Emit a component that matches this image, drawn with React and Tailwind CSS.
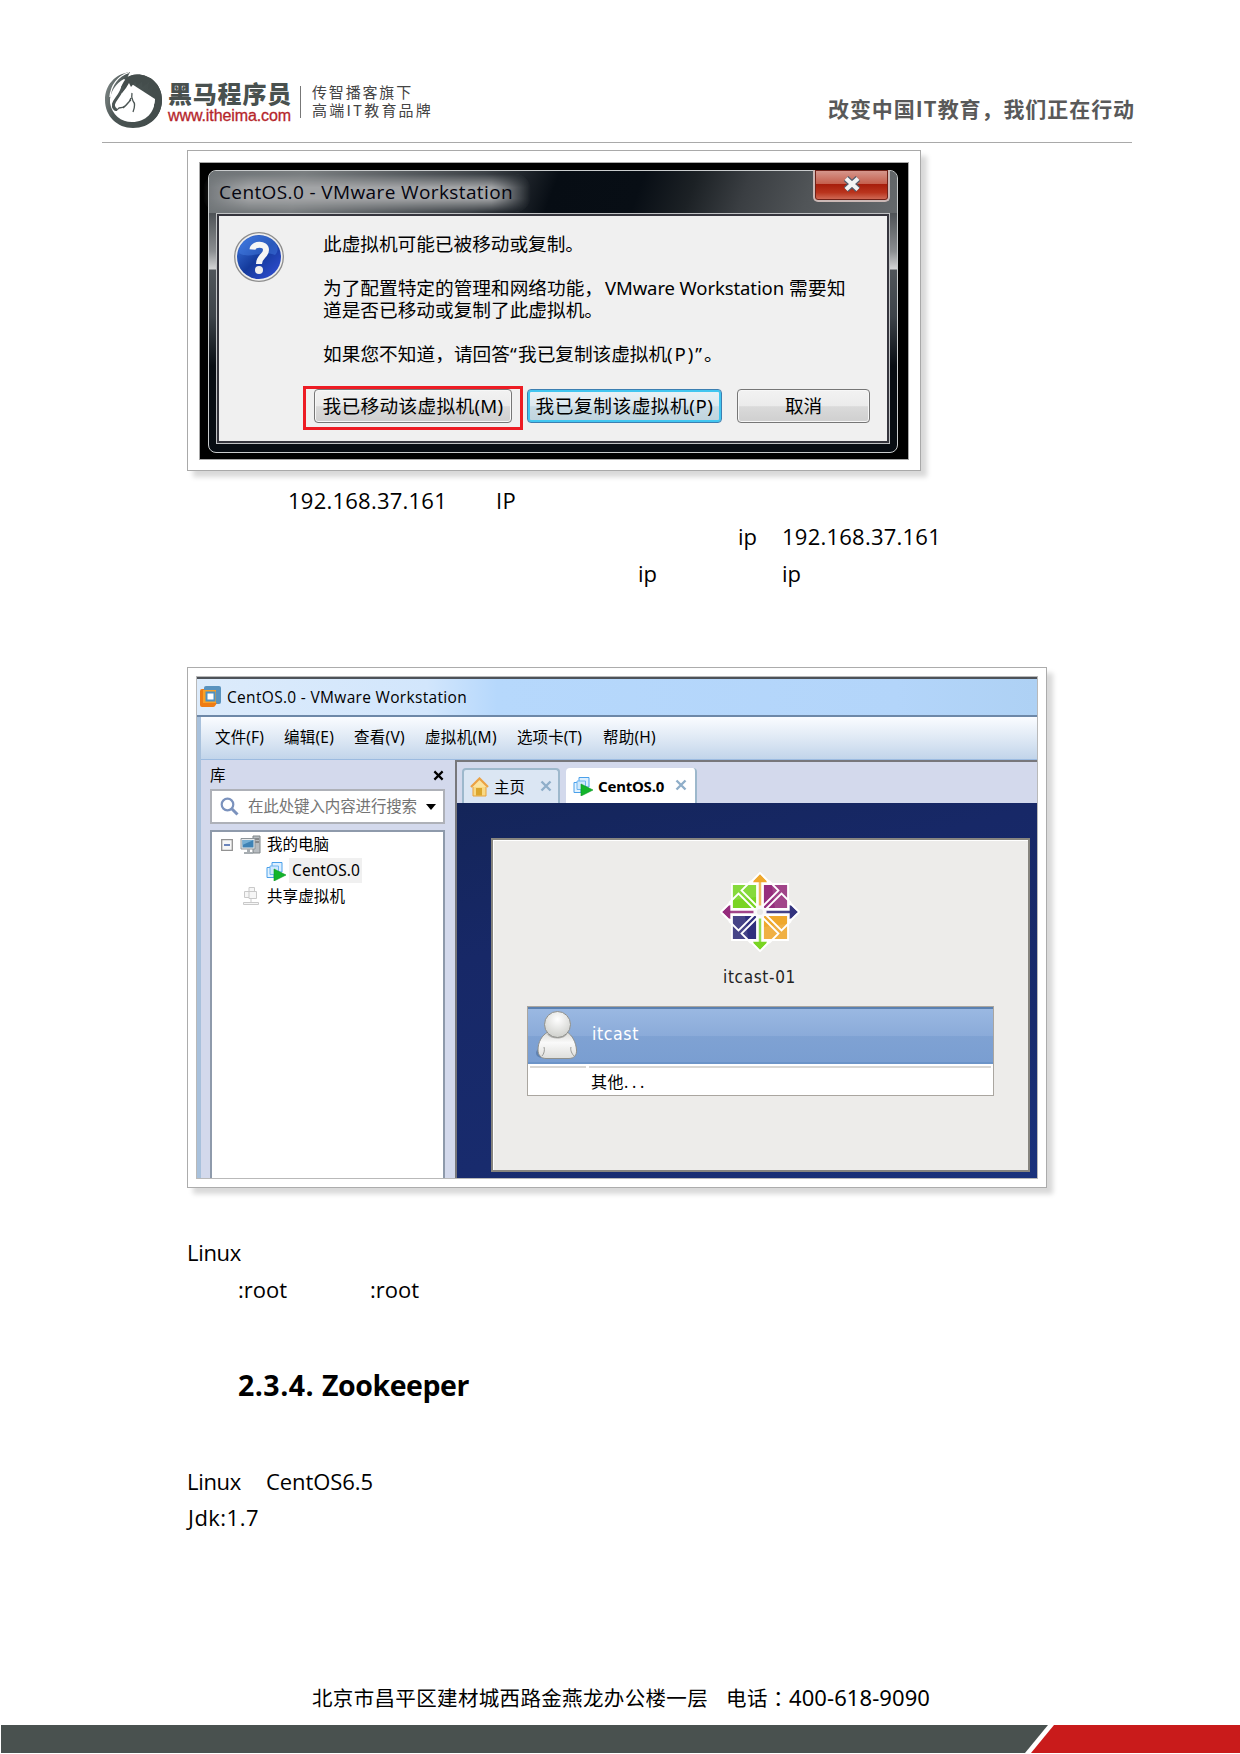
import React, { useLayoutEffect, useRef, useState } from "react";

// Text run whose tracking is computed so that it fills a given width.
function Fit({ w, className = "", children }) {
  const ref = useRef(null);
  const [spacing, setSpacing] = useState(0);
  useLayoutEffect(() => {
    const el = ref.current;
    const count = Array.from(el.textContent).length;
    setSpacing((w - el.getBoundingClientRect().width) / count);
  }, []);
  return (
    <span className={"shrink-0 whitespace-pre " + className} style={{ width: spacing === 0 ? "auto" : w }}>
      <span ref={ref} className="inline-block" style={{ letterSpacing: spacing }}>
        {children}
      </span>
    </span>
  );
}

function HorseLogo() {
  return (
    <svg className="h-[58px] w-[60px] shrink-0" viewBox="0 0 60 58">
      <defs>
        <linearGradient id="ring" x1="0" y1="0" x2="1" y2=".3">
          <stop offset="0" stopColor="#8b9392" /><stop offset=".35" stopColor="#4b5554" /><stop offset="1" stopColor="#434c4b" />
        </linearGradient>
      </defs>
      <path d="M26 1C11 3 1 14 1 29C1 45 13 57 29 57C46 57 58 45 58 29C58 14 47 3.500 33 3.500C28 3.500 24 5 20 8C10 14 6 23 6 31C7 44 16 51 28 51C17 47 10 42 8 38Z" fill="url(#ring)" />
      <path d="M20 8C12 12 5 22 6 32C8 44 17 51 28 51C42 51 51 41 51 28L20 8Z" fill="#fff" />
      <path d="M17 17C20 7 26 3.500 33 3.500C47 3.500 58 14 58 29C58 40 52 49 42 53.500C48 47 51 40 50 34C52 30 54 27 56.500 26L51 24.500L55 18L48.500 20.500L51 13L44 18L45.500 10.500L38.500 16L38 10.500L32.500 15.500L31.500 10.500L27 16L25 12L22 17L18 22C18 20 17 19 17 17Z" fill="#444d4c" />
      <path d="M19 15C17 24 11 28 9.500 33C9 36 11 39 13 38.500" fill="none" stroke="#4b5554" strokeWidth="3" />
      <path d="M25 1.500C14 5 7 14 6 26" fill="none" stroke="#fff" strokeWidth="1.300" />
      <path d="M8.500 35C9 39 13 40 15 37C20 37 25 33 27 27M28 22C27 26 28 28 29 30C31 32 31 36 29 41M27 29C24 31 22 35 19 37" fill="none" stroke="#4b5554" strokeWidth="1.300" />
    </svg>
  );
}

function Header() {
  return (
    <header className="mr-[108px] ml-[102px] flex h-[143px] border-b border-[#a9a9a9]">
      <div className="ml-[2px] mt-[71px]"><HorseLogo /></div>
      <div className="ml-[4px] mt-[80px] flex flex-col">
        <Fit w={124} className="h-[27px] font-['Noto_Sans_CJK_SC',sans-serif] text-[24px] leading-[26px] font-black text-[#49514f]">黑马程序员</Fit>
        <Fit w={123} className="h-[18px] font-['Liberation_Sans',sans-serif] text-[16px] leading-[17px] text-[#b5252b] [-webkit-text-stroke:0.3px_#b5252b]">www.itheima.com</Fit>
      </div>
      <div className="ml-[8px] mt-[86px] h-[32px] w-px bg-[#777]" />
      <div className="ml-[11px] mt-[83px] flex flex-col font-['Noto_Sans_CJK_SC',sans-serif] text-[15px] leading-[18px] text-[#444]">
        <Fit w={101} className="h-[18px]">传智播客旗下</Fit>
        <Fit w={121} className="h-[18px]">高端IT教育品牌</Fit>
      </div>
      <Fit w={307} className="-mr-[3px] ml-auto mt-[93px] h-[30px] font-['Noto_Sans_CJK_SC',sans-serif] text-[21px] leading-[30px] font-bold text-[#595959]">改变中国IT教育，我们正在行动</Fit>
    </header>
  );
}

function QuestionIcon() {
  return (
    <svg className="h-[52px] w-[52px] shrink-0" viewBox="0 0 52 52">
      <defs>
        <linearGradient id="q" x1="0" y1="0" x2="1" y2="1">
          <stop offset="0" stopColor="#3f78e0" /><stop offset=".5" stopColor="#143a9c" /><stop offset="1" stopColor="#3450d8" />
        </linearGradient>
      </defs>
      <circle cx="26" cy="26" r="24.3" fill="#eee" stroke="#8d8d8d" strokeWidth="1.3" />
      <circle cx="26" cy="26" r="22" fill="url(#q)" />
      <path d="M6 22C6 8 22 2 35 6C47 12 46 20 42 24C30 18 17 29 6 22Z" fill="#4c86ea" opacity=".4" />
      <path d="M19.500 18.500C20 12.500 33 11.500 33 19C33 25 26 25 26 33" fill="none" stroke="#f5f5f5" strokeWidth="6" />
      <circle cx="26" cy="39" r="4" fill="#eee" />
    </svg>
  );
}

function DialogButton({ box, w, children }) {
  return (
    <div className={"flex h-[34px] items-center justify-center rounded-[4px] " + box}>
      <Fit w={w} className="h-[28px] leading-[28px]">{children}</Fit>
    </div>
  );
}

const plainButton = "border border-[#767676] bg-[linear-gradient(#f2f2f2_0%,#ebebeb_50%,#dadada_52%,#cfcfcf_100%)] shadow-[inset_0_0_0_1px_#f7f7f7]";
const focusButton = "border border-[#3c7fb1] bg-[linear-gradient(#eaf2f6_0%,#dce9ef_50%,#c9dce5_52%,#bfd3dd_100%)] shadow-[inset_0_0_0_2px_#41c6f0]";

function MoveDialog() {
  return (
    <div className="ml-[187px] mt-[7px] h-[321px] w-[734px] border border-[#a9a9a9] bg-white p-[11px] shadow-[6px_6px_5px_#d9d9d9]">
      <div className="h-[298px] w-[710px] border border-[#a9a9a9] bg-black pl-[8px] pt-[7px]">
        <div className="relative h-[283px] w-[690px] rounded-[8px] border border-[#c9cccd] bg-[linear-gradient(180deg,#62676a_0px,#4b4f53_40px,#8a8d90_80px,#d4d5d6_98px,#50555a_99px,#3d4349_145px,#080d13_195px,#080d13_283px)] px-[7px]">
          <div className="-mx-[7px] flex h-[42px] rounded-t-[7px] bg-[linear-gradient(110deg,#6f7477_0px,#7a7e80_90px,#3c4146_260px,#070d14_330px,#080e15_410px,#1c2125_460px,#3a3e42_510px,#505457_570px,#65696c_660px)]">
            <div className="mt-[3px] ml-[-6px] h-[38px] w-[328px] rounded-[16px] bg-[#a2a4a6] [mask-composite:intersect] [mask-image:linear-gradient(transparent,#000_35%,#000_65%,transparent),linear-gradient(90deg,transparent,#000_14%,#000_88%,transparent)]" />
          </div>
          <Fit w={294} className="absolute top-[7px] left-[10px] h-[28px] font-['Open_Sans',sans-serif] text-[19px] leading-[28px] text-[#05050f]">CentOS.0 - VMware Workstation</Fit>
          <div className="absolute top-[-1px] right-[7px] flex h-[32px] w-[77px] items-center justify-center rounded-b-[5px] border-2 border-t-0 border-[#cbb8b5] bg-[linear-gradient(#d79a90_0%,#c5604e_45%,#a71d0b_48%,#b9341d_75%,#d2705c_100%)] shadow-[inset_0_0_0_1px_#6f2118]">
            <svg className="-mt-[2px] h-[16px] w-[20px]" viewBox="0 0 20 16"><path d="M4 2.500L16 13.500M16 2.500L4 13.500" stroke="#515c6c" strokeWidth="6.500" /><path d="M4 2.500L16 13.500M16 2.500L4 13.500" stroke="#f3f3f3" strokeWidth="4.300" /></svg>
          </div>
          <div className="h-[231px] border border-[#c0c2c4]">
            <div className="flex h-[229px] border-2 border-[#35353d] bg-[#f0f0f0] text-[18.67px] text-black font-['Noto_Sans','Noto_Sans_CJK_SC',sans-serif]">
              <div className="mt-[15px] ml-[14px]"><QuestionIcon /></div>
              <div className="ml-[18px] mt-[14px] flex flex-col">
                <div className="ml-[20px] flex h-[44px] leading-[28px]"><Fit w={261}>此虚拟机可能已被移动或复制。</Fit></div>
                <div className="ml-[20px] flex h-[22px] leading-[28px]">
                  <Fit w={280}>为了配置特定的管理和网络功能，</Fit>
                  <Fit w={179} className="ml-[2px] text-[18.500px]">VMware Workstation</Fit>
                  <Fit w={57} className="ml-[5px]">需要知</Fit>
                </div>
                <div className="ml-[20px] flex h-[44px] leading-[28px]"><Fit w={280}>道是否已移动或复制了此虚拟机。</Fit></div>
                <div className="ml-[20px] flex h-[44px] leading-[28px]">
                  <Fit w={187}>如果您不知道，请回答</Fit><Fit w={8}>“</Fit><Fit w={149}>我已复制该虚拟机</Fit><Fit w={37}>(P)”</Fit><Fit w={19}>。</Fit>
                </div>
                <div className="mt-[2px] flex items-start">
                  <div className="h-[44px] w-[220px] border-[3px] border-[#ed1c24] pl-[8px]">
                    <DialogButton w={181} box={"w-[198px] " + plainButton}>我已移动该虚拟机(M)</DialogButton>
                  </div>
                  <div className="mt-[3px] ml-[4px]"><DialogButton w={178} box={"w-[195px] " + focusButton}>我已复制该虚拟机(P)</DialogButton></div>
                  <div className="mt-[3px] ml-[15px]"><DialogButton w={37} box={"w-[133px] " + plainButton}>取消</DialogButton></div>
                </div>
              </div>
            </div>
          </div>
        </div>
      </div>
    </div>
  );
}

function VmIcon() {
  return (
    <svg className="h-[20px] w-[20px] shrink-0" viewBox="0 0 20 20">
      <path d="M6 1.500H16V11H6Z" fill="#dcefff" stroke="#4ba0ea" />
      <path d="M1 6.500H8V16.500H1Z" fill="#e3f3ff" stroke="#4ba0ea" />
      <path d="M4 5H12.500V13.500H4Z" fill="#cfe8fd" stroke="#6fb5f0" />
      <path d="M8 8L20 14L8 20Z" fill="#12b52b" stroke="#0c9624" strokeWidth=".6" />
    </svg>
  );
}

function SharedIcon() {
  return (
    <svg className="h-[19px] w-[16px] shrink-0" viewBox="0 0 16 19" fill="#f6f6f6" stroke="#c9c9c9">
      <path d="M6 .5H11.500V6H6Z" /><path d="M1.500 4.500H7V10.500H1.500Z" /><path d="M6 4.500H13.500V11.500H6Z" /><path d="M8 12V15M.5 15.500H15.500V17.500H.5Z" />
    </svg>
  );
}

function ComputerIcon() {
  return (
    <svg className="h-[20px] w-[21px] shrink-0" viewBox="0 0 21 20">
      <path d="M13 1H20V18H13Z" fill="#b7bcc0" stroke="#7f8588" />
      <path d="M14 4H19M14 7H19" stroke="#555" />
      <path d="M1 3.500H15V14H1Z" fill="#e7eaec" stroke="#8d9499" />
      <path d="M2.500 5H13.500V12.500H2.500Z" fill="#3d82b5" />
      <path d="M2.500 5H13.500L2.500 10Z" fill="#74aed4" />
      <path d="M7 14H10V17H13V19H4V17H7Z" fill="#a7adb1" />
    </svg>
  );
}

function CloseMark({ color, size }) {
  return (
    <svg className={size + " shrink-0"} viewBox="0 0 12 12"><path d="M1.500 1.500L10.500 10.500M10.500 1.500L1.500 10.500" stroke={color} strokeWidth="2.400" /></svg>
  );
}

function Petal({ color, light }) {
  return (
    <g>
      <path d="M-28 -28H-3V-3H-28Z" fill={color} stroke="#fff" strokeWidth="1.800" />
      <path d="M-27 -27H-4V-15Q-14 -13 -27 -12Z" fill={light} />
      <path d="M-9 -31L-18.500 -21.500L-3 -6M-31 -9L-21.500 -18.500L-6 -3" fill="none" stroke="#fff" strokeWidth="1.800" />
    </g>
  );
}

function Arrow({ color, light }) {
  return (
    <g>
      <path d="M0 -39L-9.500 -29.500H9.500Z" fill={color} stroke="#fff" strokeWidth="2" />
      <path d="M-1.800 -6V-31H1.800V-6Z" fill={light} stroke="#fff" strokeWidth="1" />
      <path d="M0 -37.500L-7 -29.700H7Z" fill={color} />
    </g>
  );
}

function CentosLogo() {
  return (
    <svg className="h-[80px] w-[80px]" viewBox="-40 -40 80 80">
      <Petal color="#79d422" light="#86da3c" />
      <g transform="rotate(90)"><Petal color="#962c7d" light="#a14489" /></g>
      <g transform="rotate(180)"><Petal color="#efa82c" light="#f0b044" /></g>
      <g transform="rotate(270)"><Petal color="#2f2f7d" light="#464487" /></g>
      <Arrow color="#efa82c" light="#f0bb60" />
      <g transform="rotate(90)"><Arrow color="#34347f" light="#464487" /></g>
      <g transform="rotate(180)"><Arrow color="#79d422" light="#90dd50" /></g>
      <g transform="rotate(270)"><Arrow color="#962c7d" light="#a14489" /></g>
      <circle r="6" fill="#f9f9f9" /><circle r="3" fill="#e8e8e6" />
    </svg>
  );
}

function PersonIcon() {
  return (
    <svg className="h-[50px] w-[44px] shrink-0" viewBox="0 0 44 50">
      <defs>
        <radialGradient id="head" cx=".5" cy=".3" r=".7"><stop offset="0" stopColor="#fff" /><stop offset="1" stopColor="#cfd0cc" /></radialGradient>
        <linearGradient id="body" x1="0" y1="0" x2="0" y2="1"><stop offset="0" stopColor="#d8d8d5" /><stop offset=".4" stopColor="#fafafa" /><stop offset="1" stopColor="#dededb" /></linearGradient>
      </defs>
      <ellipse cx="7" cy="43" rx="6" ry="5" fill="#35557f" opacity=".4" />
      <path d="M13 22C7 25 3 32 3 40C3 45 6 48.500 11 48.500H34C39 48.500 42 45 41.500 40C41 32 37 25 32 22Z" fill="url(#body)" stroke="#8f908c" />
      <path d="M9 37C10 40 9 44 7 46M36 37C35 40 37 44 39 46" stroke="#9a9a97" fill="none" />
      <path d="M12 24C16 30 29 30 32 24Z" fill="#8d8e8b" opacity=".6" />
      <circle cx="22.500" cy="14.500" r="13" fill="url(#head)" stroke="#8f908c" />
    </svg>
  );
}

const menus = [
  ["文件(F)", 49, "ml-[14px]"], ["编辑(E)", 50, "ml-[20px]"], ["查看(V)", 51, "ml-[20px]"],
  ["虚拟机(M)", 72, "ml-[20px]"], ["选项卡(T)", 65, "ml-[20px]"], ["帮助(H)", 53, "ml-[21px]"],
];

function Sidebar() {
  return (
    <aside className="flex w-[254px] flex-col bg-[#d3d9ec] pl-[9px] text-[15.500px]">
      <div className="flex h-[29px] w-[235px] items-center justify-between pr-[1px]">
        <Fit w={16} className="h-[24px] leading-[24px]">库</Fit>
        <CloseMark color="#000" size="mt-px h-[11px] w-[11px]" />
      </div>
      <div className="flex h-[35px] w-[235px] items-center border-2 border-[#aeb1b8] bg-white pl-[8px]">
        <svg className="h-[19px] w-[19px]" viewBox="0 0 19 19" fill="none" stroke="#7b92bd"><circle cx="7.500" cy="7.500" r="5.800" strokeWidth="2.200" /><path d="M12 12L17.500 17.500" strokeWidth="3" /></svg>
        <Fit w={169} className="ml-[9px] h-[24px] leading-[22px] text-[#747474]">在此处键入内容进行搜索</Fit>
        <svg className="ml-[9px] h-[6px] w-[10px]" viewBox="0 0 10 6"><path d="M0 0H10L5 6Z" fill="#000" /></svg>
      </div>
      <div className="mt-[6px] w-[235px] flex-1 border-2 border-b-0 border-[#8e9aab] bg-white">
        <div className="flex h-[26px] items-center pl-[9px]">
          <svg className="h-[12px] w-[12px]" viewBox="0 0 12 12"><path d="M.7.7H11.300V11.300H.7Z" fill="#f7f7f7" stroke="#929292" strokeWidth="1.300" /><path d="M3 6H9" stroke="#3d5fa8" strokeWidth="1.500" /></svg>
          <div className="ml-[7px]"><ComputerIcon /></div>
          <Fit w={62} className="ml-[6px] h-[24px] leading-[22px]">我的电脑</Fit>
        </div>
        <div className="flex h-[25px] items-center pl-[54px]">
          <VmIcon />
          <div className="ml-[3px] flex h-[25px] w-[73px] bg-[#f0f0f0] pl-[3px]"><Fit w={68} className="h-[25px] leading-[24px]">CentOS.0</Fit></div>
        </div>
        <div className="flex h-[27px] items-center pl-[31px]">
          <SharedIcon />
          <Fit w={78} className="ml-[8px] h-[24px] leading-[22px]">共享虚拟机</Fit>
        </div>
      </div>
    </aside>
  );
}

function LoginScreen() {
  return (
    <div className="flex flex-1 bg-[linear-gradient(165deg,#142559_0%,#172867_30%,#182b6d_70%,#1a327c_100%)] pt-[35px] pl-[34px]">
      <div className="flex h-[334px] w-[539px] flex-col border-2 border-[#87857f] bg-[#edecea] shadow-[inset_1px_1px_0_#fff]">
        <div className="mt-[32px] ml-[227px] h-[80px]"><CentosLogo /></div>
        <div className="mt-[12px] flex h-[26px] pl-[230px]"><Fit w={73} className="h-[26px] font-['DejaVu_Sans_Condensed','DejaVu_Sans',sans-serif] text-[17px] leading-[26px] text-[#222]">itcast-01</Fit></div>
        <div className="mt-[16px] ml-[34px] h-[90px] w-[467px] border border-[#aaa6a0] bg-white">
          <div className="flex h-[57px] border-y-2 border-t-[#5b81b1] border-b-[#6c94c8] bg-[linear-gradient(#9ab8e2,#8babd9_50%,#7fa2d3_52%,#7a9ed1)]">
            <div className="mt-[1px] ml-[7px]"><PersonIcon /></div>
            <Fit w={47} className="ml-[13px] h-[30px] mt-[10px] font-['DejaVu_Sans_Condensed','DejaVu_Sans',sans-serif] text-[17.500px] leading-[30px] text-white">itcast</Fit>
          </div>
          <div className="mt-[2px] flex h-[2px] gap-[3px] px-[2px]"><div className="w-[56px] bg-[#d9d7d4]" /><div className="flex-1 bg-[#d9d7d4]" /></div>
          <div className="flex pl-[63px]"><Fit w={33} className="h-[26px] text-[16px] leading-[28px]">其他</Fit><Fit w={24} className="h-[26px] text-[16px] leading-[28px]">...</Fit></div>
        </div>
      </div>
    </div>
  );
}

function Workstation() {
  return (
    <div className="ml-[187px] h-[521px] w-[860px] border border-[#acacac] bg-white p-[8px] shadow-[6px_6px_5px_#d9d9d9]">
      <div className="flex h-[503px] w-[842px] flex-col border border-[#b9b9b9] font-['Noto_Sans','Noto_Sans_CJK_SC',sans-serif] text-black">
        <div className="h-[2px] bg-[#4d5258]" />
        <div className="flex h-[38px] items-center border-b-2 border-[#6d88a8] bg-[linear-gradient(90deg,#dcebfb_0px,#d2e6fc_230px,#b6d8fc_300px,#b3d5fa_700px,#aed1f4_840px)] pl-[3px]">
          <svg className="h-[22px] w-[21px]" viewBox="0 0 21 22"><rect x="4" y="0" width="17" height="18" rx="2" fill="#5a93be" /><path d="M0 5Q0 3 2 3H4V17H17L15 20Q14.500 21 13 21H2Q0 21 0 19Z" fill="#ee7c14" /><rect x="3" y="4" width="13" height="13" fill="#f9a126" /><rect x="6.500" y="6.500" width="8" height="8" fill="#fff" stroke="#4e91c1" strokeWidth="2" /></svg>
          <Fit w={240} className="ml-[6px] h-[28px] font-['Open_Sans',sans-serif] text-[15.500px] leading-[28px]">CentOS.0 - VMware Workstation</Fit>
        </div>
        <div className="flex flex-1 border-l-[4px] border-[#a8c1dc]">
          <div className="flex flex-1 flex-col">
            <div className="flex h-[43px] items-center border-b border-[#9cbbe0] bg-[linear-gradient(#fafcff,#dfe9f5_50%,#c2d5ea)] text-[15.500px]">
              {menus.map(([label, w, gap]) => (
                <div key={label} className={"flex " + gap}><Fit w={w} className="h-[24px] leading-[23px]">{label}</Fit></div>
              ))}
            </div>
            <div className="flex flex-1">
              <Sidebar />
              <main className="flex w-[582px] flex-col border-t-2 border-l-2 border-[#77777b] bg-[#d3d9ec]">
                <div className="flex h-[41px] items-end pl-[5px]">
                  <div className="flex h-[35px] w-[98px] items-center rounded-t-[4px] border-2 border-b-0 border-[#9db8cc] bg-[#dbe6f3] pl-[6px]">
                    <svg className="h-[20px] w-[19px]" viewBox="0 0 19 20"><path d="M3 9H16V19H3Z" fill="#f8d985" stroke="#e9a13b" /><path d="M1 10L9.500 1.500L18 10" fill="#fbe4a0" stroke="#eba244" strokeWidth="2.200" /><path d="M6 11H12V18.500H6Z" fill="#dba62d" /></svg>
                    <Fit w={31} className="ml-[5px] h-[26px] text-[15.500px] leading-[26px]">主页</Fit>
                    <div className="ml-[15px] -mt-[1px]"><CloseMark color="#8faec9" size="h-[12px] w-[12px]" /></div>
                  </div>
                  <div className="ml-[6px] flex h-[35px] w-[131px] items-center rounded-t-[4px] border-r-2 border-[#9db8cc] bg-white pl-[7px]">
                    <VmIcon />
                    <Fit w={66} className="ml-[5px] h-[26px] text-[15px] font-bold leading-[26px]">CentOS.0</Fit>
                    <div className="ml-[11px] -mt-[1px]"><CloseMark color="#8faec9" size="h-[12px] w-[12px]" /></div>
                  </div>
                </div>
                <LoginScreen />
              </main>
            </div>
          </div>
        </div>
      </div>
    </div>
  );
}

function Line({ className = "", children }) {
  return <div className={"flex h-[36px] font-['Open_Sans',sans-serif] text-[22px] leading-[36px] text-black " + className}>{children}</div>;
}

function Footer() {
  return (
    <footer>
      <div className="flex h-[40px] pl-[312px] font-['Noto_Sans','Noto_Sans_CJK_SC',sans-serif] text-[20.500px] leading-[40px] text-black">
        <Fit w={396}>北京市昌平区建材城西路金燕龙办公楼一层</Fit>
        <Fit w={42} className="ml-[18px]">电话</Fit>
        <Fit w={21} className="font-['Noto_Sans_CJK_TC',sans-serif]">：</Fit>
        <Fit w={141} className="text-[22px] leading-[39px]">400-618-9090</Fit>
      </div>
      <div className="mt-[7px] ml-px flex h-[28px] bg-white">
        <div className="w-[1047px] bg-[#49514f] [clip-path:polygon(0_0,100%_0,1024px_100%,0_100%)]" />
        <div className="-ml-[17px] flex-1 bg-[#c91b1b] [clip-path:polygon(23px_0,100%_0,100%_100%,0_100%)]" />
      </div>
    </footer>
  );
}

export default function App() {
  return (
    <div className="h-[1754px] w-[1240px] overflow-hidden bg-white">
      <Header />
      <MoveDialog />
      <div className="mt-[11px] h-[186px]">
        <Line className="pl-[288px]"><Fit w={159}>192.168.37.161</Fit><Fit w={20} className="ml-[49px]">IP</Fit></Line>
        <Line className="pl-[738px]"><Fit w={19}>ip</Fit><Fit w={159} className="ml-[25px]">192.168.37.161</Fit></Line>
        <Line className="mt-px pl-[638px]"><Fit w={19}>ip</Fit><Fit w={19} className="ml-[125px]">ip</Fit></Line>
      </div>
      <div className="-mt-px"><Workstation /></div>
      <div className="mt-[46px] h-[465px]">
        <Line className="pl-[187px]"><Fit w={54}>Linux</Fit></Line>
        <Line className="mt-px pl-[238px]"><Fit w={49}>:root</Fit><Fit w={49} className="ml-[83px]">:root</Fit></Line>
        <h2 className="mt-[56px] flex h-[44px] pl-[238px] font-['Open_Sans',sans-serif] text-[28.500px] leading-[44px] font-bold text-black"><Fit w={84}>2.3.4. </Fit><Fit w={147}>Zookeeper</Fit></h2>
        <Line className="mt-[56px] pl-[187px]"><Fit w={54}>Linux</Fit><Fit w={107} className="ml-[25px]">CentOS6.5</Fit></Line>
        <Line className="pl-[188px]"><Fit w={71}>Jdk:1.7</Fit></Line>
      </div>
      <div className="-mt-[21px]"><Footer /></div>
    </div>
  );
}
